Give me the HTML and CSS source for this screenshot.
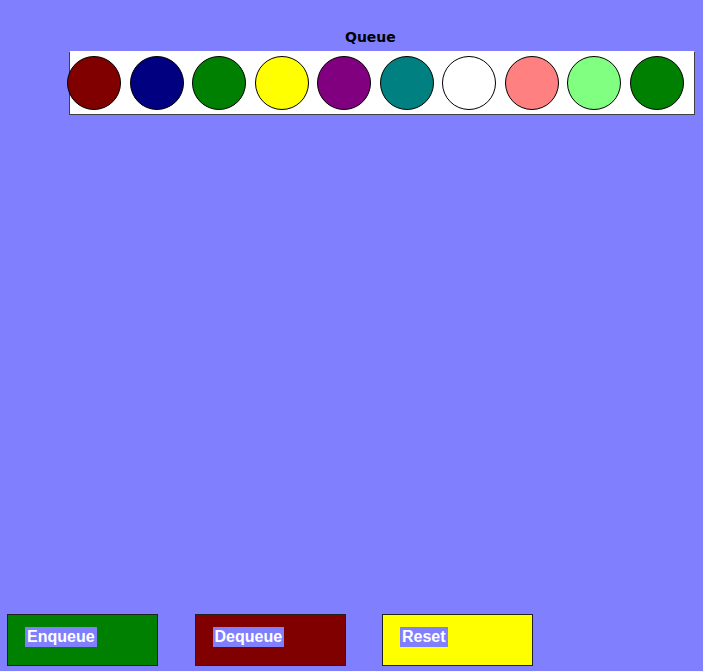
FILE: index.html
```html
<!DOCTYPE html>
<html>
<head>
<meta charset="utf-8">
<link rel="stylesheet" href="styles.css">
</head>
<body>
<div class="app">
  <div class="title">Queue</div>
  <div class="queue">
    <div class="ball c1"></div>
    <div class="ball c2"></div>
    <div class="ball c3"></div>
    <div class="ball c4"></div>
    <div class="ball c5"></div>
    <div class="ball c6"></div>
    <div class="ball c7"></div>
    <div class="ball c8"></div>
    <div class="ball c9"></div>
    <div class="ball c10"></div>
  </div>
  <div class="buttons">
    <div class="btn enq"><span class="label">Enqueue</span></div>
    <div class="btn deq"><span class="label">Dequeue</span></div>
    <div class="btn rst"><span class="label">Reset</span></div>
  </div>
</div>
</body>
</html>
```
FILE: styles.css
```css
html, body {
  margin: 0;
  padding: 0;
  background: #8080ff;
}
.app {
  height: 671px;
  display: flex;
  flex-direction: column;
  box-sizing: border-box;
}
.title {
  font-family: "DejaVu Sans", sans-serif;
  font-weight: bold;
  font-size: 14px;
  color: #000;
  padding-left: 345px;
  padding-top: 29px;
  line-height: 16px;
  height: 22px;
}
.queue {
  margin-left: 69px;
  width: 624px;
  height: 62px;
  background: #fff;
  border: 1px solid #404040;
  border-top-color: #ffffff;
  display: flex;
  align-items: center;
  gap: 8.5px;
}
.ball {
  width: 52px;
  height: 52px;
  border-radius: 50%;
  border: 1px solid #000;
  flex: none;
}
.ball.c1 { margin-left: -3px; }
.c1 { background: #800000; }
.c2 { background: #000080; }
.c3 { background: #008000; }
.c4 { background: #ffff00; }
.c5 { background: #800080; }
.c6 { background: #008080; }
.c7 { background: #ffffff; }
.c8 { background: #ff8080; }
.c9 { background: #80ff80; }
.c10 { background: #008000; }
.buttons {
  margin-top: auto;
  display: flex;
  gap: 36.5px;
  padding-left: 7px;
  padding-bottom: 5px;
}
.btn {
  border: 1px solid #202020;
  padding-left: 17px;
  padding-top: 12px;
  box-sizing: content-box;
  width: 132px;
  height: 38px;
}
.enq { background: #008000; }
.deq { background: #800000; }
.rst { background: #ffff00; }
.label {
  display: inline-block;
  background: #8080ff;
  color: #ffffff;
  font-family: "Liberation Sans", sans-serif;
  font-weight: bold;
  font-size: 16px;
  line-height: 20px;
  padding: 0 2px;
}
```
